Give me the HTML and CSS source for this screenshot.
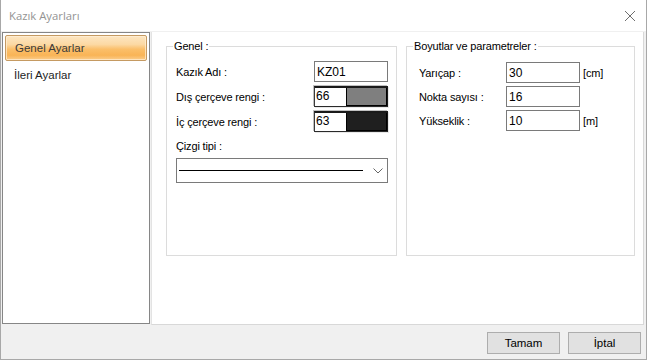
FILE: index.html
```html
<!DOCTYPE html>
<html lang="tr">
<head>
<meta charset="utf-8">
<title>Kazık Ayarları</title>
<link rel="stylesheet" href="styles.css">
</head>
<body>
<div class="window">
  <div class="titlebar">
    <span class="title">Kazık Ayarları</span>
    <svg class="close" width="12" height="12" viewBox="0 0 12 12"><path d="M1 1L11 11M11 1L1 11" stroke="#6e6e6e" stroke-width="1" fill="none"/></svg>
  </div>
  <div class="main">
    <div class="sidebar">
      <div class="nav-item selected">Genel Ayarlar</div>
      <div class="nav-item">İleri Ayarlar</div>
    </div>
    <div class="content">
      <fieldset class="group group-left">
        <legend>Genel :</legend>
        <div class="rows">
          <div class="row">
            <span class="label">Kazık Adı :</span>
            <div class="input">KZ01</div>
          </div>
          <div class="row">
            <span class="label">Dış çerçeve rengi :</span>
            <div class="color-box"><span class="num">66</span><span class="swatch swatch-mid"></span></div>
          </div>
          <div class="row">
            <span class="label">İç çerçeve rengi :</span>
            <div class="color-box"><span class="num">63</span><span class="swatch swatch-dark"></span></div>
          </div>
          <div class="label line-label">Çizgi tipi :</div>
          <div class="combo">
            <span class="line-sample"></span>
            <svg class="chev" width="10" height="6" viewBox="0 0 10 6"><path d="M0.5 0.5L5 5L9.5 0.5" stroke="#666" stroke-width="1" fill="none"/></svg>
          </div>
        </div>
      </fieldset>
      <fieldset class="group group-right">
        <legend>Boyutlar ve parametreler :</legend>
        <div class="rows rows-right">
          <div class="row2">
            <span class="label">Yarıçap :</span>
            <div class="input">30</div>
            <span class="unit">[cm]</span>
          </div>
          <div class="row2">
            <span class="label">Nokta sayısı :</span>
            <div class="input">16</div>
            <span class="unit"></span>
          </div>
          <div class="row2">
            <span class="label">Yükseklik :</span>
            <div class="input">10</div>
            <span class="unit">[m]</span>
          </div>
        </div>
      </fieldset>
    </div>
  </div>
  <div class="footer">
    <button class="btn">Tamam</button>
    <button class="btn">İptal</button>
  </div>
</div>
</body>
</html>
```
FILE: styles.css
```css
* { box-sizing: border-box; }
html, body { margin: 0; padding: 0; }
body {
  width: 647px;
  height: 360px;
  overflow: hidden;
  background: #ffffff;
  font-family: "Liberation Sans", Arial, sans-serif;
  font-size: 11px;
  letter-spacing: -0.15px;
  color: #000;
}
.window {
  width: 647px;
  height: 360px;
  background: #f0f0f0;
  border-left: 1px solid #a8a8a8;
  border-right: 1px solid #a8a8a8;
  border-bottom: 1px solid #a8a8a8;
  display: flex;
  flex-direction: column;
}
.titlebar {
  height: 31px;
  background: #ffffff;
  display: flex;
  align-items: center;
  justify-content: space-between;
  padding: 0 10px 0 8px;
  flex: 0 0 31px;
}
.title {
  font-family: "Open Sans", "Liberation Sans", sans-serif;
  font-size: 11.3px;
  letter-spacing: 0;
  color: #939393;
  margin-top: -1px;
}
.main {
  display: flex;
  height: 294px;
  flex: 0 0 294px;
  padding: 1px 2px 0 1px;
}
.sidebar {
  width: 148px;
  height: 292px;
  background: #fff;
  border: 1px solid #868686;
  padding: 2px 2px;
}
.nav-item {
  height: 26px;
  display: flex;
  align-items: center;
  padding-left: 9px;
  font-size: 11.5px;
  letter-spacing: 0;
  color: #1e1e1e;
}
.nav-item + .nav-item { margin-top: 1px; }
.nav-item.selected {
  border: 1px solid #c59a62;
  border-radius: 2px;
  color: #3a3a3a;
  background: linear-gradient(to bottom, #fde6c2 0%, #fcd9a4 35%, #fbbf6a 55%, #f9b456 80%, #fbcd8c 100%);
  box-shadow: inset 0 0 0 1px rgba(255,240,215,0.7);
}
.content {
  flex: 1;
  height: 293px;
  margin-left: 1px;
  background: #fff;
  border-left: 1px solid #e3e3e3;
  border-right: 1px solid #d8d8d8;
  border-bottom: 1px solid #d8d8d8;
  display: flex;
  gap: 9px;
  padding: 8px 0 0 14px;
}
.group {
  margin: 0;
  padding: 0;
  border: 1px solid #dcdcdc;
  height: 216px;
  min-width: 0;
}
.group-left { width: 231px; }
.group-right { width: 229px; }
legend {
  margin-left: 6px;
  padding: 0 1px;
  line-height: 13px;
  font-size: 11px;
  color: #000;
}
.rows {
  padding: 8px 8px 0 9px;
  display: flex;
  flex-direction: column;
}
.row {
  display: flex;
  align-items: center;
  justify-content: space-between;
  height: 21px;
  margin-bottom: 4px;
}
.input {
  width: 74px;
  height: 21px;
  border: 1px solid #7a7a7a;
  background: #fff;
  padding: 3px 0 0 2px;
  font-size: 12px;
  line-height: 14px;
  letter-spacing: 0;
}
.color-box {
  width: 74px;
  height: 21px;
  display: flex;
  border-left: 1px solid #3a3a3a;
  border-top: 2px solid #1a1a1a;
  border-right: 1px solid #1a1a1a;
  border-bottom: 1px solid #2a2a2a;
  box-shadow: -1px -1px 0 #c0c0c0, 1px 1px 0 #e8e8e8;
  background: #fff;
}
.num {
  width: 31px;
  padding: 1px 0 0 1px;
  font-size: 12px;
  line-height: 15px;
  letter-spacing: 0;
}
.swatch {
  flex: 1;
  border: 1px solid #000;
  border-top: none;
}
.swatch-mid { background: #7f7f7f; }
.swatch-dark { background: #1f1f1f; }
.line-label {
  margin-top: 4px;
  height: 14px;
}
.combo {
  margin-top: 4px;
  height: 25px;
  border: 1px solid #7a7a7a;
  background: #fff;
  display: flex;
  align-items: center;
  padding: 0 4px 0 2px;
  gap: 10px;
}
.line-sample {
  flex: 1;
  height: 1px;
  background: #000;
}
.chev { margin-top: 1px; }
.rows-right {
  padding: 9px 0 0 12px;
}
.row2 {
  display: grid;
  grid-template-columns: 87px 74px auto;
  align-items: center;
  height: 21px;
  margin-bottom: 3px;
}
.unit { padding-left: 3px; }
.footer {
  flex: 1;
  display: flex;
  justify-content: flex-end;
  align-items: flex-start;
  gap: 8px;
  padding: 7px 5px 0 0;
}
.btn {
  width: 73px;
  height: 22px;
  margin: 0;
  background: #e1e1e1;
  border: 1px solid #adadad;
  border-radius: 0;
  font-family: "Liberation Sans", Arial, sans-serif;
  font-size: 11.5px;
  color: #000;
  padding: 0;
}
```
